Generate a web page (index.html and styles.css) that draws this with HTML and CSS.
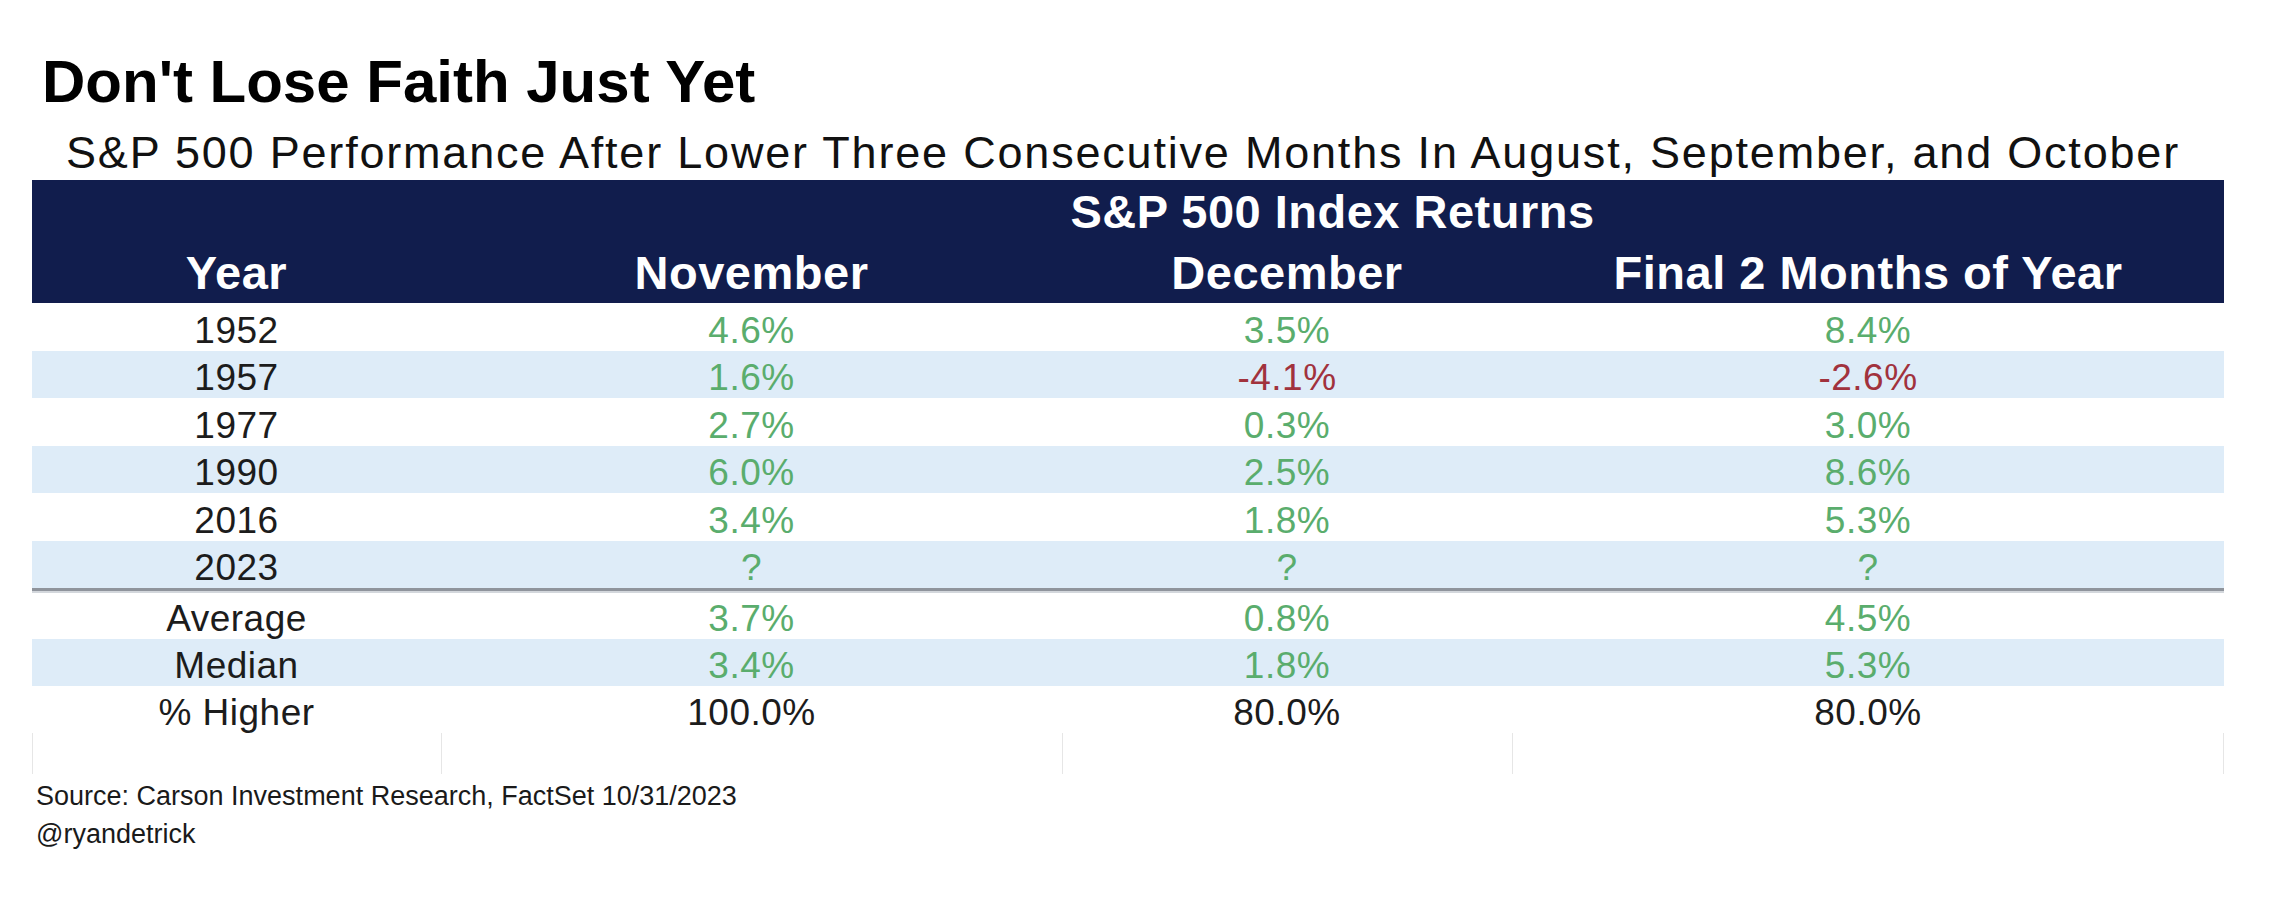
FILE: index.html
```html
<!DOCTYPE html>
<html lang="en">
<head>
<meta charset="utf-8">
<title>Don't Lose Faith Just Yet</title>
<link rel="stylesheet" href="styles.css">
</head>
<body>
<div class="page">
  <h1 class="title">Don't Lose Faith Just Yet</h1>
  <p class="subtitle">S&amp;P 500 Performance After Lower Three Consecutive Months In August, September, and October</p>
  <table class="returns">
    <colgroup>
      <col class="c-year">
      <col class="c-nov">
      <col class="c-dec">
      <col class="c-final">
    </colgroup>
    <thead>
      <tr class="h1">
        <th></th>
        <th colspan="3">S&amp;P 500 Index Returns</th>
      </tr>
      <tr class="h2">
        <th>Year</th>
        <th>November</th>
        <th>December</th>
        <th>Final 2 Months of Year</th>
      </tr>
    </thead>
    <tbody class="years">
      <tr><td>1952</td><td class="pos">4.6%</td><td class="pos">3.5%</td><td class="pos">8.4%</td></tr>
      <tr class="alt"><td>1957</td><td class="pos">1.6%</td><td class="neg">-4.1%</td><td class="neg">-2.6%</td></tr>
      <tr><td>1977</td><td class="pos">2.7%</td><td class="pos">0.3%</td><td class="pos">3.0%</td></tr>
      <tr class="alt"><td>1990</td><td class="pos">6.0%</td><td class="pos">2.5%</td><td class="pos">8.6%</td></tr>
      <tr><td>2016</td><td class="pos">3.4%</td><td class="pos">1.8%</td><td class="pos">5.3%</td></tr>
      <tr class="alt last"><td>2023</td><td class="pos">?</td><td class="pos">?</td><td class="pos">?</td></tr>
    </tbody>
    <tbody class="stats">
      <tr class="first"><td>Average</td><td class="pos">3.7%</td><td class="pos">0.8%</td><td class="pos">4.5%</td></tr>
      <tr class="alt"><td>Median</td><td class="pos">3.4%</td><td class="pos">1.8%</td><td class="pos">5.3%</td></tr>
      <tr><td>% Higher</td><td>100.0%</td><td>80.0%</td><td>80.0%</td></tr>
      <tr class="blank"><td></td><td></td><td></td><td></td></tr>
    </tbody>
  </table>
  <div class="source">
    <p>Source: Carson Investment Research, FactSet 10/31/2023</p>
    <p>@ryandetrick</p>
  </div>
</div>
</body>
</html>
```

FILE: styles.css
```css
html, body {
  margin: 0;
  padding: 0;
  background: #ffffff;
}

body {
  font-family: "Liberation Sans", Arial, sans-serif;
  color: #1c1c1c;
}

.page {
  padding: 52px 0 0 32px;
  width: 2192px;
}

.title {
  margin: 0 0 0 10px;
  font-size: 60px;
  line-height: 60px;
  font-weight: 700;
  color: #000000;
}

.subtitle {
  margin: 19px 0 5px 34px;
  font-size: 45px;
  line-height: 44px;
  letter-spacing: 1.8px;
  white-space: nowrap;
  color: #111111;
}

.returns {
  width: 2192px;
  border-collapse: separate;
  border-spacing: 0;
  table-layout: fixed;
}

.c-year { width: 409px; }
.c-nov { width: 621px; }
.c-dec { width: 450px; }
.c-final { width: 712px; }

.returns thead {
  background: #111d4d;
  color: #ffffff;
}

.returns th {
  padding: 0;
  font-size: 47px;
  font-weight: 700;
  letter-spacing: 0.5px;
  text-align: center;
  white-space: nowrap;
  background: #111d4d;
}

.returns .h1 th {
  height: 62px;
}

.returns .h2 th {
  height: 61px;
}

.returns td {
  box-sizing: border-box;
  padding: 4px 0 0 0;
  height: 47.5px;
  font-size: 37px;
  line-height: 34px;
  letter-spacing: 0.5px;
  text-align: center;
  vertical-align: middle;
  color: #1c1c1c;
}

.returns .years td {
  padding-top: 8px;
}

.returns tr.alt td {
  background: #deecf8;
}

.returns tr.last td {
  height: 50.5px;
  border-bottom: 3px solid #8f949c;
}

.returns .stats tr td {
  height: 47px;
  padding-top: 7px;
}

.returns .stats tr.first td {
  height: 48px;
  padding-top: 5px;
  border-top: 2px solid #d3d7dc;
}

.returns td.pos {
  color: #5aad6d;
}

.returns td.neg {
  color: #a1323d;
}

.returns .stats tr.blank td {
  height: 41px;
  padding: 0;
  border-left: 1px solid #e6e6e6;
}

.returns .stats tr.blank td:last-child {
  border-right: 1px solid #e6e6e6;
}

.source {
  margin: 3px 0 0 4px;
  font-size: 27px;
  line-height: 38px;
  color: #1a1a1a;
}

.source p {
  margin: 0;
}
```
